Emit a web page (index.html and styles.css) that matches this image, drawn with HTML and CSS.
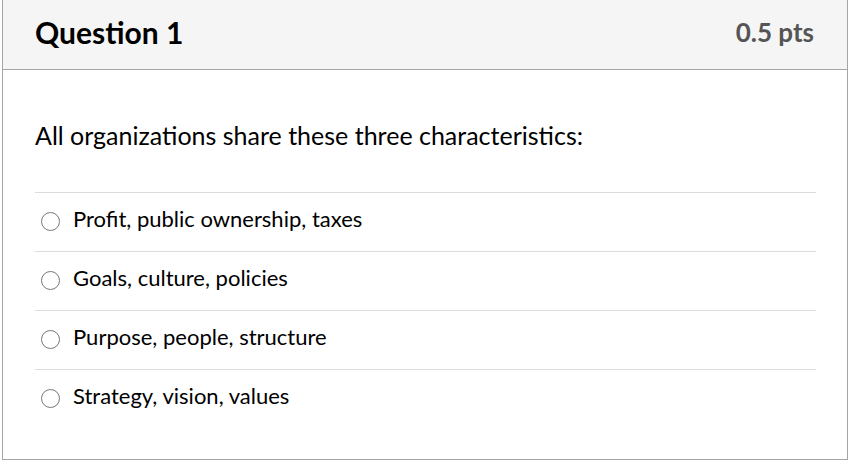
FILE: index.html
```html
<!DOCTYPE html>
<html>
<head>
<meta charset="utf-8">
<link rel="stylesheet" href="styles.css">
</head>
<body>
<div class="question">
  <div class="header">
    <h2 class="title">Question 1</h2>
    <span class="points">0.5 pts</span>
  </div>
  <div class="content">
    <p class="prompt">All organizations share these three characteristics:</p>
    <div class="answers">
      <label class="answer"><span class="radio"></span><span class="label">Profit, public ownership, taxes</span></label>
      <label class="answer"><span class="radio"></span><span class="label">Goals, culture, policies</span></label>
      <label class="answer"><span class="radio"></span><span class="label">Purpose, people, structure</span></label>
      <label class="answer"><span class="radio"></span><span class="label">Strategy, vision, values</span></label>
    </div>
  </div>
</div>
</body>
</html>
```
FILE: styles.css
```css
html, body {
  margin: 0;
  padding: 0;
  background: #fff;
}
body {
  font-family: Lato, "Liberation Sans", sans-serif;
  color: #2d3b45;
}
.question {
  margin-left: 2px;
  width: 844px;
  height: 459px;
  border: 1px solid #a5a5a5;
  border-top: none;
  box-sizing: content-box;
}
.header {
  height: 70px;
  box-sizing: border-box;
  background: #f5f5f5;
  border-bottom: 1px solid #a5a5a5;
  display: flex;
  align-items: center;
  justify-content: space-between;
  padding: 0 33px 6px 32px;
}
.title {
  margin: 0;
  font-size: 30px;
  font-weight: 700;
  color: #000;
}
.points {
  font-size: 26px;
  font-weight: 700;
  color: #555;
}
.content {
  padding: 0 31px 0 32px;
}
.prompt {
  margin: 0;
  padding: 48px 0 40px;
  font-size: 25px;
  line-height: 34px;
  color: #000;
}
.answers {
  display: flex;
  flex-direction: column;
}
.answer {
  display: flex;
  align-items: center;
  height: 59px;
  border-top: 1px solid #dcdcdc;
  box-sizing: border-box;
  padding: 0 0 2px 6px;
  gap: 13px;
}
.radio {
  width: 19px;
  height: 19px;
  border: 1px solid #777;
  border-radius: 50%;
  box-sizing: border-box;
  background: #fff;
}
.label {
  font-size: 22px;
  color: #000;
  margin-bottom: 5px;
}
```
